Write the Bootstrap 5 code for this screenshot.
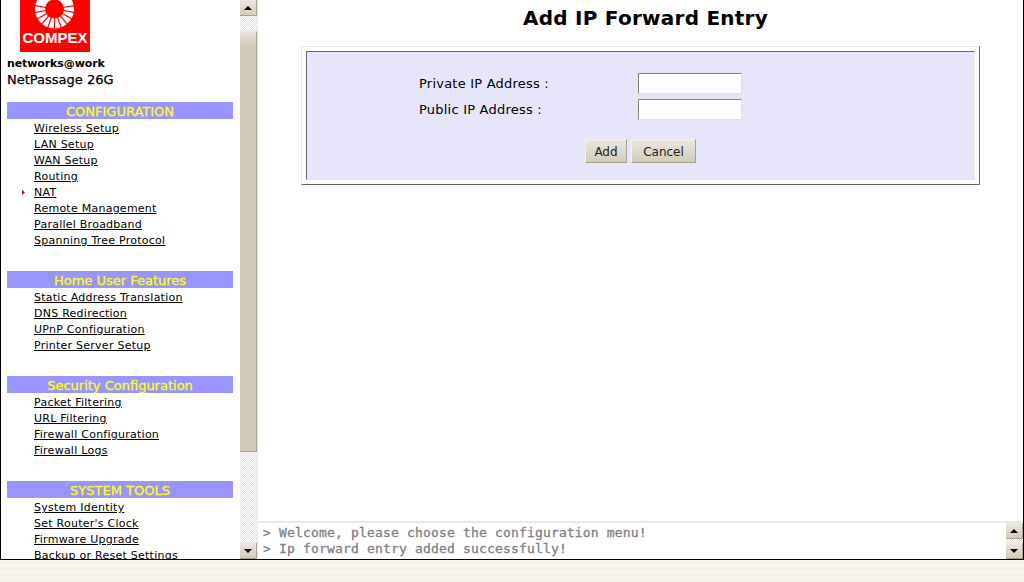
<!DOCTYPE html>
<html lang="en"><head><meta charset="utf-8"><title>Add IP Forward Entry</title>
<link rel="stylesheet" href="https://cdn.jsdelivr.net/npm/bootstrap@5.3.0/dist/css/bootstrap.min.css">
<style>
html,body{height:582px;overflow:hidden;background:#f7f3ec}
body{font-family:"DejaVu Sans",sans-serif;font-size:11px;color:#000;
background:repeating-linear-gradient(#f9f6f0 0 3px,#f6f2ea 3px 6px)}
.shell{height:560px;width:1024px;border:solid #000;border-width:0 1px 1px 1px;background:#fff;overflow:hidden}
.side{width:239px;height:100%;overflow:hidden;flex:none}
.logo-box{width:70px;height:52px;margin-left:19px;background:#f00;overflow:hidden;position:relative;text-align:center}
.logo-box svg{display:block}
.logo-name{position:absolute;left:0;right:0;top:28px;color:#fff;font:bold 15px/20px "Liberation Sans",sans-serif}
.tag{margin:4px 0 0 6px;font-weight:700;font-size:11px;line-height:16px;letter-spacing:-.1px;height:15px}
.model{margin-left:6px;font-size:13px;line-height:17px;height:31px;-webkit-text-stroke:.25px #000}
.sect{margin:0 7px 0 6px;height:17px;background:#9a94ff;color:#ff0;text-align:center;font-size:13px;line-height:19px;font-family:"DejaVu Sans",sans-serif;-webkit-text-stroke:.3px #ff0;overflow:hidden}
.menu{list-style:none;margin:0;padding:2px 0 0 33px;height:152px}
.menu.m8{height:152px}.menu.m4{height:88px}
.menu li{height:16px;line-height:16px;position:relative;white-space:nowrap}
.menu a{color:#000;text-decoration:underline;font-size:11px;letter-spacing:.25px}
.mark-dot{position:absolute;left:-12px;top:5px;width:3px;height:5px;background:#a01030;clip-path:polygon(0 0,100% 50%,0 100%)}
.sbar{width:17px;flex:none;display:flex;flex-direction:column;height:100%;background:repeating-conic-gradient(#e4e0d6 0 25%,#fff 0 50%) 0 0/2px 2px}
.sbtn{height:16px;flex:none;background:linear-gradient(#ece9e0,#d4ccbb);border-right:1px solid #aaa392;border-bottom:1px solid #aaa392;display:flex;align-items:center;justify-content:center}
.tri-up{width:0;height:0;border:4px solid transparent;border-top:0;border-bottom:4px solid #000}
.tri-dn{width:0;height:0;border:4px solid transparent;border-bottom:0;border-top:4px solid #000}
.thumb{margin-top:15px;height:421px;flex:none;background:linear-gradient(#e8e4da,#d2cab8 14px);border-top:1px solid #ece9e0;border-bottom:1px solid #aaa392;border-right:1px solid #aaa392}
.sfill{flex:1}
.gutter{width:1px;flex:none;background:#ece9d8}
.main{min-width:0}
.upper{height:523px;flex:none;border-bottom:2px solid #ece9e0;overflow:hidden}
.ttl{margin:0;padding:6px 0 0 10px;height:46px;text-align:center;font:bold 20px/24px "DejaVu Sans",sans-serif;letter-spacing:.25px}
.outer-pan{margin-left:43px;width:679px;height:139px;padding:4px;border:1px solid;border-color:#e8e6dc #666 #666 #e8e6dc}
.inner-pan{height:100%;background:#e6e6fa;border:1px solid;border-color:#666 #ece9e0 #ece9e0 #666;padding:19px 0 0 112px;font-size:13px}
.frow{height:26px;display:flex;align-items:center}
.frow label{width:219px;letter-spacing:.22px}
.tbox{width:104px;height:21px;margin-bottom:2px;background:#fff;border:1px solid;border-color:#8a8472 #e4e0d0 #e4e0d0 #8a8472;border-radius:0;padding:0}
.actions{margin:16px 0 0 166px;gap:4px}
.actbtn{height:24px;padding:1px 0 0;font-size:12px;color:#222;background:linear-gradient(#ebe8df,#d3cbba);border:1px solid;border-color:#f4f2ec #a8a190 #a8a190 #f4f2ec;border-radius:0;font-family:"DejaVu Sans",sans-serif}
.lower{height:36px;flex:none}
.msgs{font:13px/16px "DejaVu Sans Mono",monospace;letter-spacing:.17px;color:#808080;padding:2px 0 0 5px;white-space:pre;overflow:hidden;-webkit-text-stroke:.3px #808080}
.mini{width:17px;flex:none;display:flex;flex-direction:column;justify-content:space-between;background:repeating-conic-gradient(#e4e0d6 0 25%,#fff 0 50%) 0 0/2px 2px}
</style></head><body>
<div class="shell d-flex">
  <nav class="side">
    <div class="logo-box">
      <svg width="70" height="52" viewBox="0 0 70 52" aria-hidden="true">
        <circle cx="34.500" cy="9" r="14.500" fill="none" stroke="#fff" stroke-width="10"/>
        <g stroke="#f00" stroke-width="1.200">
          <line x1="34.500" y1="9" x2="34.500" y2="33"/>
          <line x1="34.500" y1="9" x2="42.700" y2="31.600"/>
          <line x1="34.500" y1="9" x2="49.900" y2="27.400"/>
          <line x1="34.500" y1="9" x2="55.300" y2="21"/>
          <line x1="34.500" y1="9" x2="58.100" y2="13.200"/>
          <line x1="34.500" y1="9" x2="58.100" y2="4.800"/>
          <line x1="34.500" y1="9" x2="26.300" y2="31.600"/>
          <line x1="34.500" y1="9" x2="19.100" y2="27.400"/>
          <line x1="34.500" y1="9" x2="13.700" y2="21"/>
          <line x1="34.500" y1="9" x2="10.900" y2="13.200"/>
          <line x1="34.500" y1="9" x2="10.900" y2="4.800"/>
        </g>
      </svg>
      <div class="logo-name">COMPEX</div>
    </div>
    <div class="tag">networks@work</div>
    <div class="model">NetPassage 26G</div>
    <div class="sect">CONFIGURATION</div>
    <ul class="menu">
      <li><a href="#">Wireless Setup</a></li>
      <li><a href="#">LAN Setup</a></li>
      <li><a href="#">WAN Setup</a></li>
      <li><a href="#">Routing</a></li>
      <li><span class="mark-dot"></span><a href="#">NAT</a></li>
      <li><a href="#">Remote Management</a></li>
      <li><a href="#">Parallel Broadband</a></li>
      <li><a href="#">Spanning Tree Protocol</a></li>
    </ul>
    <div class="sect">Home User Features</div>
    <ul class="menu m4">
      <li><a href="#">Static Address Translation</a></li>
      <li><a href="#">DNS Redirection</a></li>
      <li><a href="#">UPnP Configuration</a></li>
      <li><a href="#">Printer Server Setup</a></li>
    </ul>
    <div class="sect">Security Configuration</div>
    <ul class="menu m4">
      <li><a href="#">Packet Filtering</a></li>
      <li><a href="#">URL Filtering</a></li>
      <li><a href="#">Firewall Configuration</a></li>
      <li><a href="#">Firewall Logs</a></li>
    </ul>
    <div class="sect">SYSTEM TOOLS</div>
    <ul class="menu m4">
      <li><a href="#">System Identity</a></li>
      <li><a href="#">Set Router's Clock</a></li>
      <li><a href="#">Firmware Upgrade</a></li>
      <li><a href="#">Backup or Reset Settings</a></li>
    </ul>
  </nav>
  <div class="sbar">
    <div class="sbtn"><span class="tri-up"></span></div>
    <div class="thumb"></div>
    <div class="sfill"></div>
    <div class="sbtn"><span class="tri-dn"></span></div>
  </div>
  <div class="gutter"></div>
  <main class="main flex-grow-1 d-flex flex-column">
    <div class="upper">
      <h1 class="ttl">Add IP Forward Entry</h1>
      <div class="outer-pan">
        <form class="inner-pan">
          <div class="frow"><label for="pv">Private IP Address :</label><input id="pv" class="tbox" type="text"></div>
          <div class="frow"><label for="pb">Public IP Address :</label><input id="pb" class="tbox" type="text"></div>
          <div class="actions d-flex">
            <button type="button" class="actbtn" style="width:42px">Add</button>
            <button type="button" class="actbtn" style="width:65px">Cancel</button>
          </div>
        </form>
      </div>
    </div>
    <div class="lower d-flex">
      <div class="msgs flex-grow-1">&gt; Welcome, please choose the configuration menu!
&gt; Ip forward entry added successfully!</div>
      <div class="mini">
        <div class="sbtn"><span class="tri-up"></span></div>
        <div class="sbtn"><span class="tri-dn"></span></div>
      </div>
    </div>
  </main>
</div>
</body></html>
